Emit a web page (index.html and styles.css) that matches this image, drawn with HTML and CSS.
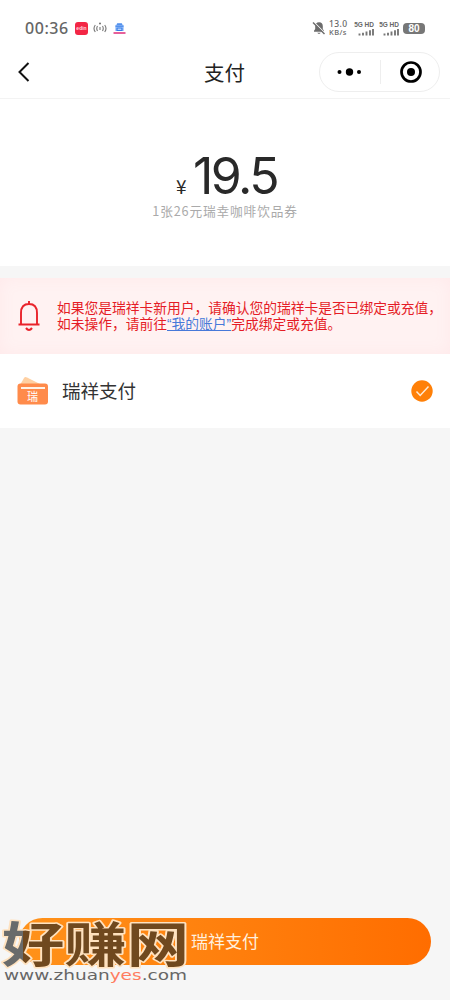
FILE: index.html
```html
<!DOCTYPE html>
<html lang="zh-CN">
<head>
<meta charset="UTF-8">
<title>支付</title>
<link rel="stylesheet" href="styles.css">
</head>
<body>
<div class="screen">
  <div class="status">
    <span class="clock">00:36</span>
    <span class="app"><b>edin</b></span>
    <svg class="cast" width="14" height="14" viewBox="0 0 14 14" fill="none" stroke="#777" stroke-width="1.1"><path d="M2.3 4Q-.3 7.500 2.3 11M4.500 5Q3 7.500 4.500 10M11.700 4Q14.300 7.500 11.700 11M9.500 5Q11 7.500 9.500 10M7 6v3"/><circle cx="7" cy="2.500" r=".5"/></svg>
    <svg class="shop" width="13" height="13" viewBox="0 0 13 13"><path d="M2 5Q2.500 1 6.500 1T11 5V9H2z" fill="#b4d1fc"/><path d="M4 2.200h5M2.500 4.200h8M4 6h5v2.500h-5z" fill="none" stroke="#347de8" stroke-width="1.200"/><path d="M.5 11h12" stroke="#e6609b" stroke-width="2"/></svg>
    <div class="indicators">
      <svg width="14" height="14" viewBox="0 0 14 14"><path d="M2 10.800V9.800L3.200 8V5Q3.500 1.500 7 1.300T10.800 5V8l1.200 1.800v1zM5.200 11.800h3.600Q7 14 5.200 11.800" fill="#6c6c6c"/><path d="M2.200 1.500l11 11" stroke="#fff" stroke-width="1.300"/><path d="M1 1.500l11.500 11.500" stroke="#6c6c6c" stroke-width="1.400"/></svg>
      <div class="speed"><span>13.0</span><span>KB/s</span></div>
      <div class="signal"><span>5G HD</span><svg width="18" height="7" viewBox="0 0 18 7"><path d="M3.500 6.500V4.500M7 6.500V3.800M10.500 6.500V2.500M14 6.500V1.200M17 6.500V0" stroke="#777" stroke-width="1.900"/></svg></div>
      <div class="signal"><span>5G HD</span><svg width="18" height="7" viewBox="0 0 18 7"><path d="M3.500 6.500V4.500M7 6.500V3.800M10.500 6.500V2.500M14 6.500V1.200M17 6.500V0" stroke="#777" stroke-width="1.900"/></svg></div>
      <div class="battery">80</div>
    </div>
  </div>
  <header class="nav">
    <svg class="back" width="14" height="22" viewBox="0 0 14 22"><path d="M12.500 2L3.500 11l9 9" fill="none" stroke="#111" stroke-width="2"/></svg>
    <h1>支付</h1>
    <div class="capsule">
      <svg width="26" height="10" viewBox="0 0 26 10"><circle cx="3.500" cy="5" r="2"/><circle cx="13.500" cy="5" r="3.700"/><circle cx="23" cy="5" r="2"/></svg>
      <i></i>
      <svg width="24" height="24" viewBox="0 0 24 24"><circle cx="12" cy="12" r="9.500" fill="none" stroke="#000" stroke-width="2.700"/><circle cx="12" cy="12" r="4"/></svg>
    </div>
  </header>
  <section class="amount">
    <div class="price"><span class="yen">¥</span><span class="num">19.5</span></div>
    <p>1张26元瑞幸咖啡饮品券</p>
  </section>
  <section class="notice">
    <svg width="24" height="32" viewBox="0 0 24 32" fill="none" stroke="#e9232b" stroke-width="1.900"><path d="M12 1v3M4 24V13Q4 4 12 4T20 13V24M1.500 24.500h21"/><path d="M9 28Q12 32 15 28" stroke-width="2.100"/></svg>
    <p>如果您是瑞祥卡新用户，请确认您的瑞祥卡是否已绑定或充值，<br>如未操作，请前往<a>“我的账户”</a>完成绑定或充值。</p>
  </section>
  <section class="method">
    <svg width="32" height="30" viewBox="0 0 32 30"><path d="M3 9L7 2Q8 .5 10 1.500L25 9z" fill="#ffd0a2"/><rect x=".5" y="7.500" width="30.500" height="21" rx="3" fill="#ff8b4b"/><path d="M4 12h24" stroke="#fff3e8" stroke-width="2"/><text class="badge" x="15.500" y="25">瑞</text></svg>
    <span>瑞祥支付</span>
    <svg width="22" height="22" viewBox="0 0 22 22"><circle cx="11" cy="11" r="10.700" fill="#ff8008"/><path d="M5.500 11.500l3.700 4L17.500 6.500" fill="none" stroke="#ffead4" stroke-width="1.500"/></svg>
  </section>
  <footer><button>瑞祥支付</button></footer>
  <svg class="watermark" width="194" height="80" viewBox="0 0 194 80">
    <defs><linearGradient id="ink" gradientUnits="userSpaceOnUse" x1="0" y1="0" x2="192" y2="0"><stop offset=".12" stop-color="#696b6b"/><stop offset=".12" stop-color="#70491f"/></linearGradient></defs>
    <text class="brand" x="2" y="53" textLength="187" lengthAdjust="spacingAndGlyphs" fill="url(#ink)">好赚网</text>
    <text class="site" x="4" y="71" textLength="183" lengthAdjust="spacingAndGlyphs">www.zhuan<tspan fill="#ff7c60">yes</tspan>.com</text>
  </svg>
</div>
</body>
</html>
```
FILE: styles.css
```css
* { box-sizing: border-box; }
body { margin: 0; background: #f6f6f6; font-family: "Noto Sans CJK SC", sans-serif; }
h1, p { margin: 0; font-weight: 400; }
svg { flex: none; }
.screen { position: relative; width: 450px; height: 1000px; display: flex; flex-direction: column; background: #f6f6f6; overflow: hidden; }
.status { height: 46px; padding: 10px 25px 0; display: flex; align-items: center; background: #fff; color: #666; }
.clock { width: 50px; font: 500 16px/20px "Noto Sans", sans-serif; letter-spacing: .55px; }
.app { width: 13px; height: 13px; border-radius: 3px; background: #f32645; color: #ffd7dd; font: 5px/13px "Liberation Sans", sans-serif; text-align: center; }
.cast { margin-left: 5px; }
.shop { margin-left: 6px; }
.indicators { margin-left: auto; display: flex; align-items: center; }
.speed { width: 20px; margin-left: 3px; display: flex; flex-direction: column; font: 500 8.500px/8px "Noto Sans", sans-serif; letter-spacing: .4px; white-space: nowrap; }
.speed span:last-child { font-size: 7.500px; }
.signal { width: 21px; margin-left: 4px; display: flex; flex-direction: column; align-items: flex-end; font: bold 6.5px/7px "Liberation Sans", sans-serif; white-space: nowrap; }
.signal svg { margin-top: 1px; }
.battery { width: 22px; height: 11px; margin-left: 4px; border-radius: 4px; background: #777; color: #fff; font: bold 10px/11px "Liberation Sans", sans-serif; text-align: center; }
.nav { height: 53px; padding: 0 10px 0 16px; display: grid; grid-template-columns: 122px 1fr 121px; align-items: center; border-bottom: 1px solid #f3f3f3; background: #fff; }
.nav h1 { font-size: 20.500px; line-height: 30px; color: #222; text-align: center; padding-right: 8px; }
.capsule { height: 40px; border: 1px solid #eee; border-radius: 20px; display: flex; align-items: center; padding: 0 16px; justify-content: space-between; }
.capsule i { width: 1px; height: 24px; background: #eee; }
.amount { height: 167px; padding-top: 48px; background: #fff; text-align: center; }
.price { height: 56px; padding-left: 3px; display: flex; justify-content: center; align-items: baseline; color: #292929; }
.yen { width: 17px; font-size: 19px; line-height: 58px; text-align: left; }
.num { font: 50px/58px Inter, sans-serif; letter-spacing: -2.500px; }
.amount p { font-size: 12.700px; line-height: 16px; color: #aaa; letter-spacing: .85px; }
.notice { height: 76px; margin-top: 12px; padding: 0 17px; display: flex; align-items: center; gap: 16px; background: #fff2f2; box-shadow: inset 0 0 16px #ffe9ea; color: #e51c26; }
.notice p { font-size: 13.750px; line-height: 16px; white-space: nowrap; }
.notice a { color: #4779d9; text-decoration: underline; font-family: "Liberation Sans", "Noto Sans CJK SC", sans-serif; }
.method { height: 74px; padding: 0 17px; display: flex; align-items: center; background: #fff; }
.method span { flex: 1; margin: -2px 0 0 13px; font-size: 18.500px; color: #333; }
.badge { font-size: 11px; fill: #fff; text-anchor: middle; }
footer { margin-top: auto; height: 82px; padding: 0 19px; }
button { width: 100%; height: 47px; display: block; border: 0; border-radius: 24px; background: linear-gradient(90deg, #ff921a, #ff6d00); color: #fff0df; font: 17px/46px "Noto Sans CJK SC", sans-serif; padding: 0 0 2px; }
.watermark { position: absolute; left: 0; top: 909px; }
.brand { font: 700 48px "Noto Sans CJK SC", sans-serif; stroke: #ffe2bf; stroke-width: 3px; paint-order: stroke; stroke-linejoin: round; }
.site { font: 14px "DejaVu Sans", sans-serif; fill: #666; stroke: #f6f6f6; stroke-width: 1.500px; paint-order: stroke; }
```
